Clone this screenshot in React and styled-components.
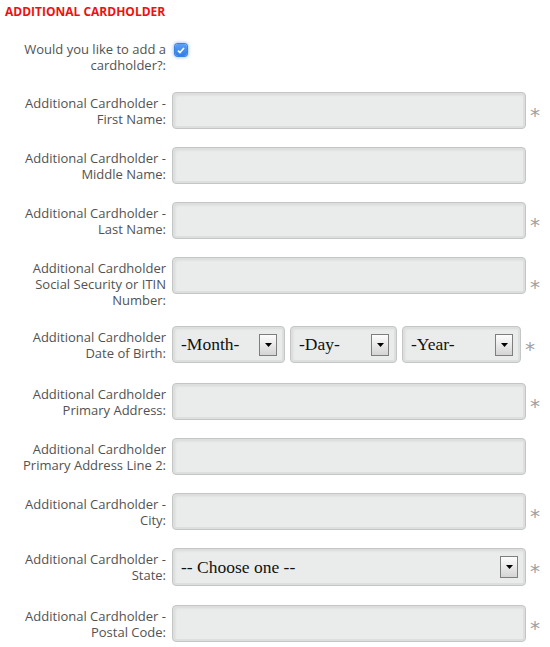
import React from 'react';
import styled, { createGlobalStyle } from 'styled-components';

const GlobalStyle = createGlobalStyle`
    body {
        margin: 0;
        background: #fff;
        font-family: "Open Sans", "Liberation Sans", sans-serif;
    }
`;

const Page = styled.div`
    width: 550px;
    padding: 4px 0 0 6px;
    box-sizing: border-box;
`;

const SectionTitle = styled.h3`
    margin: 0 0 17px -1px;
    font-size: 12px;
    line-height: 16px;
    font-weight: 700;
    color: #ef1010;
`;

const Row = styled.div`
    display: flex;
    align-items: flex-start;
    margin-bottom: ${p => p.gap || 18}px;
`;

const Label = styled.label`
    width: 160px;
    flex: none;
    padding-top: ${p => p.top || 3}px;
    box-sizing: border-box;
    text-align: right;
    font-size: 13px;
    line-height: ${p => p.lh || 16}px;
    color: #525252;
`;

const Field = styled.div`
    display: flex;
    align-items: center;
    margin-left: 6px;
    width: ${p => p.w || 354}px;
    gap: 5px;
`;

const TextInput = styled.input`
    width: 100%;
    height: 37px;
    box-sizing: border-box;
    border: 1px solid #c3c6c5;
    border-radius: 4px;
    background: #e9eceb;
    box-shadow: inset 0 0 0 2px #dcdfde, inset 2px 2px 3px rgba(0, 0, 0, .08);
    outline: none;
    padding: 0 8px;
    font-size: 14px;
`;

const Select = styled.div`
    display: flex;
    align-items: center;
    justify-content: space-between;
    width: ${p => p.w}px;
    height: ${p => p.h || 37}px;
    box-sizing: border-box;
    flex: none;
    padding: 0 7px 0 8px;
    border: 1px solid #c3c6c5;
    border-radius: 4px;
    background: #e9eceb;
    box-shadow: inset 0 0 0 2px #dcdfde, inset 2px 2px 3px rgba(0, 0, 0, .06);
    font-family: "Liberation Serif", "DejaVu Serif", serif;
    font-size: 17.5px;
    color: #111;
`;

const ArrowBtn = styled.span`
    display: flex;
    align-items: center;
    justify-content: center;
    width: 18px;
    height: 22px;
    box-sizing: border-box;
    border: 1px solid #7e7e7e;
    background: linear-gradient(#fdfdfd, #d4d4d4);
`;

const Req = styled.span`
    margin-left: 4px;
    font-family: "DejaVu Sans", sans-serif;
    font-size: 20px;
    line-height: 1;
    color: #a0a0a0;
    padding-top: 8px;
    align-self: center;
`;

const Check = styled.span`
    display: flex;
    align-items: center;
    justify-content: center;
    width: 12px;
    height: 12px;
    margin: 7px 0 0 9px;
    border-radius: 3px;
    background: linear-gradient(#5aa0f5, #2f7de8);
    box-shadow: 0 0 0 1px #3a82e0, 0 0 3px 2px rgba(110, 165, 250, .55);
`;

const Arrow = () => (
    <ArrowBtn>
        <svg width="7" height="4" viewBox="0 0 7 4"><path d="M0 0h7L3.5 4z" fill="#000" /></svg>
    </ArrowBtn>
);

const fields = [
    { label: ['Additional Cardholder -', 'First Name:'], req: true },
    { label: ['Additional Cardholder -', 'Middle Name:'] },
    { label: ['Additional Cardholder -', 'Last Name:'], req: true },
    { label: ['Additional Cardholder', 'Social Security or ITIN', 'Number:'], req: true },
    { label: ['Additional Cardholder', 'Date of Birth:'], req: true, dob: true, gap: 20 },
    { label: ['Additional Cardholder', 'Primary Address:'], req: true },
    { label: ['Additional Cardholder', 'Primary Address Line 2:'] },
    { label: ['Additional Cardholder -', 'City:'], req: true },
    { label: ['Additional Cardholder -', 'State:'], req: true, state: true, gap: 19 },
    { label: ['Additional Cardholder -', 'Postal Code:'], req: true },
];

const LabelText = ({ lines }) => lines.map((l, i) => (
    <React.Fragment key={i}>{l}{i < lines.length - 1 && <br />}</React.Fragment>
));

export default function App() {
    return (
        <Page>
            <GlobalStyle />
            <SectionTitle>ADDITIONAL CARDHOLDER</SectionTitle>

            <Row gap={19}>
                <Label top={4}>Would you like to add a<br />cardholder?:</Label>
                <Check>
                    <svg width="8" height="7" viewBox="0 0 8 7"><path d="M1 3.6l2 2L7 1" stroke="#fff" strokeWidth="1.6" fill="none" /></svg>
                </Check>
            </Row>

            {fields.map((f, i) => (
                <Row key={i} gap={f.gap}>
                    <Label><LabelText lines={f.label} /></Label>
                    {f.dob ? (
                        <Field w={349}>
                            <Select w={113}>-Month-<Arrow /></Select>
                            <Select w={107}>-Day-<Arrow /></Select>
                            <Select w={119}>-Year-<Arrow /></Select>
                        </Field>
                    ) : f.state ? (
                        <Field>
                            <Select w={354} h={38}>-- Choose one --<Arrow /></Select>
                        </Field>
                    ) : (
                        <Field>
                            <TextInput type="text" />
                        </Field>
                    )}
                    {f.req && <Req>*</Req>}
                </Row>
            ))}
        </Page>
    );
}
